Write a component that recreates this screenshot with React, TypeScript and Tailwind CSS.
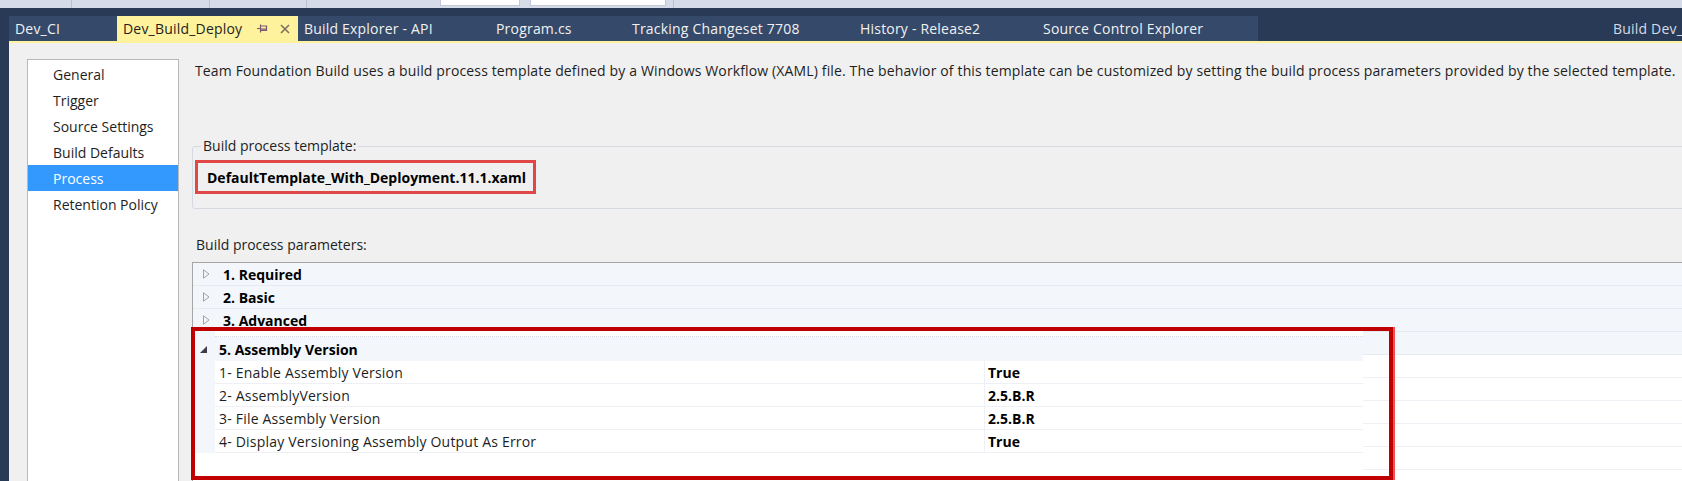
import React from "react";

const TABS = [
  { label: "Dev_CI", cls: "w-[108px]" },
  { label: "Dev_Build_Deploy", cls: "w-[181px]", active: true },
  { label: "Build Explorer - API", cls: "w-[192px]" },
  { label: "Program.cs", cls: "w-[136px]" },
  { label: "Tracking Changeset 7708", cls: "w-[228px]" },
  { label: "History - Release2", cls: "w-[183px]" },
  { label: "Source Control Explorer", cls: "w-[221px]" },
];

const NAV = ["General", "Trigger", "Source Settings", "Build Defaults", "Process", "Retention Policy"];

const PARAMS = [
  ["1- Enable Assembly Version", "True"],
  ["2- AssemblyVersion", "2.5.B.R"],
  ["3- File Assembly Version", "2.5.B.R"],
  ["4- Display Versioning Assembly Output As Error", "True"],
];

function Collapsed() {
  return (
    <svg width="7" height="10" viewBox="0 0 7 10" className="shrink-0">
      <path d="M0.5 0.8 L6 5 L0.5 9.2 Z" fill="none" stroke="#a2a2a2" strokeWidth="1" />
    </svg>
  );
}

function Expanded() {
  return (
    <svg width="7" height="7" viewBox="0 0 7 7" className="shrink-0">
      <path d="M7 0 L7 7 L0 7 Z" fill="#3e3b4c" />
    </svg>
  );
}

function PinIcon() {
  return (
    <svg width="11" height="9" viewBox="0 0 11 9">
      <path d="M0 4.5 H3.5 M3.5 0.5 V8.5 M3.5 2 H9.5 V6.5 H3.5 M3.5 5.2 H9.5" fill="none" stroke="#7b5870" strokeWidth="1.2" />
    </svg>
  );
}

function CloseIcon() {
  return (
    <svg width="10" height="10" viewBox="0 0 10 10">
      <path d="M1 1 L9 9 M9 1 L1 9" stroke="#7d6f5f" strokeWidth="1.6" />
    </svg>
  );
}

export default function App() {
  return (
    <div className="w-[1682px] h-[481px] overflow-hidden bg-[#293a56] flex flex-col font-['Open_Sans',sans-serif] text-[#1e1e1e]">
      {/* toolbar remnant */}
      <div className="h-[8px] shrink-0 bg-[#d6dbe9] flex items-start">
        <div className="w-[71px] h-full" />
        <div className="w-[138px] h-full border-l border-[#b9c0cf]" />
        <div className="w-[97px] h-full border-l border-[#b9c0cf]" />
        <div className="w-[134px] h-full border-l border-[#b9c0cf]" />
        <div className="w-[80px] h-[6px] bg-white border border-t-0 border-[#c3c8d4]" />
        <div className="w-[10px]" />
        <div className="w-[136px] h-[6px] bg-white border border-t-0 border-[#c3c8d4]" />
        <div className="w-[7px]" />
        <div className="w-[200px] h-full border-l border-[#b9c0cf]" />
      </div>
      <div className="h-[8px] shrink-0" />

      {/* document tabs */}
      <div className="h-[25px] shrink-0 flex pl-[9px] tracking-[0.2px]">
        <div className="flex bg-[#35496a]">
          {TABS.map((t) =>
            t.active ? (
              <div key={t.label} className={`${t.cls} bg-[#fff29d] flex items-center pl-[6px] text-[14px] text-[#1e1e1e]`}>
                <span className="whitespace-nowrap">{t.label}</span>
                <span className="ml-auto flex items-center gap-[12px] pr-[8px]">
                  <PinIcon />
                  <CloseIcon />
                </span>
              </div>
            ) : (
              <div key={t.label} className={`${t.cls} flex items-center pl-[6px] text-[14px] text-[#f1f1f1] whitespace-nowrap`}>
                {t.label}
              </div>
            )
          )}
        </div>
        <div className="flex-1 min-w-0 overflow-hidden flex items-center pl-[355px] text-[14px] text-[#d5dbe6] whitespace-nowrap">
          Build Dev_Build_Deploy
        </div>
      </div>
      <div className="h-[2px] shrink-0 ml-[9px] bg-[#fff29d]" />

      {/* content */}
      <div className="flex-1 min-h-0 ml-[9px] bg-[#f0f0f0] flex">
        <div className="ml-[18px] mt-[16px] w-[152px] shrink-0 h-[440px] bg-white border border-[#b8b8b8] pt-[1px] text-[14px]">
          {NAV.map((n) => (
            <div
              key={n}
              className={`h-[26px] flex items-center pl-[25px] ${n === "Process" ? "bg-[#3399ff] text-white" : ""}`}
            >
              {n}
            </div>
          ))}
        </div>

        <div className="ml-[13px] flex-1 min-w-0 relative">
          <p className="mt-[18px] pl-[3px] text-[14px] leading-[20px] tracking-[0.14px] whitespace-nowrap">
            Team Foundation Build uses a build process template defined by a Windows Workflow (XAML) file. The behavior of this template can be customized by setting the build process parameters provided by the selected template.
          </p>

          {/* template group box */}
          <div className="mt-[65px] w-[1600px] h-[63px] border border-[#d5d9e0] rounded-[3px] relative pt-[13px] pl-[2px]">
            <span className="absolute left-[8px] -top-[11px] px-[2px] bg-[#f0f0f0] text-[14px] leading-[20px]">
              Build process template:
            </span>
            <div className="w-[341px] h-[34px] border-[3px] border-[#e04848] flex items-center pl-[9px] text-[14px] font-bold text-black whitespace-nowrap">
              DefaultTemplate_With_Deployment.11.1.xaml
            </div>
          </div>

          <p className="mt-[26px] pl-[4px] text-[14px] leading-[20px]">Build process parameters:</p>

          {/* parameters grid */}
          <div className="mt-[7px] w-[1600px] border-t border-l border-[#a5a5a5] bg-white">
            {["1. Required", "2. Basic", "3. Advanced", ""].map((c) => (
              <div key={c || "hidden"} className="h-[23px] bg-[#f3f6fb] border-b border-[#e6eaf1] flex items-center pl-[10px] gap-[13px] text-[14px] font-bold text-black">
                <Collapsed />
                <span>{c}</span>
              </div>
            ))}
            {[0, 1, 2, 3, 4, 5].map((i) => (
              <div key={i} className="h-[23px] border-b border-[#eef0f5]" />
            ))}
          </div>

          {/* highlighted section */}
          <div className="absolute left-[-1px] top-[284px] w-[1202px] h-[153px] border-4 border-[#c00000] shadow-[2px_0_0_#ec5252] flex">
            <div className="w-[1168px] flex flex-col bg-white text-[14px]">
              <div className="h-[6px] shrink-0 flex">
                <div className="w-[20px] bg-[#f3f6fb]" />
                <div className="flex-1 border-b border-dotted border-[#d7dbe3]" />
              </div>
              <div className="h-[24px] shrink-0 bg-[#f3f6fb] flex items-center pl-[5px] gap-[12px] font-bold text-black">
                <Expanded />
                <span>5. Assembly Version</span>
              </div>
              {PARAMS.map(([k, v]) => (
                <div key={k} className="h-[23px] shrink-0 flex">
                  <div className="w-[20px] bg-[#f3f6fb]" />
                  <div className="flex-1 flex border-b border-[#eef0f5]">
                    <div className="w-[770px] flex items-center pl-[4px] tracking-[0.2px] border-r border-[#eef0f5]">{k}</div>
                    <div className="flex-1 flex items-center pl-[3px] font-bold text-black">{v}</div>
                  </div>
                </div>
              ))}
              <div className="flex-1 bg-white" />
            </div>
          </div>
        </div>
      </div>
    </div>
  );
}
